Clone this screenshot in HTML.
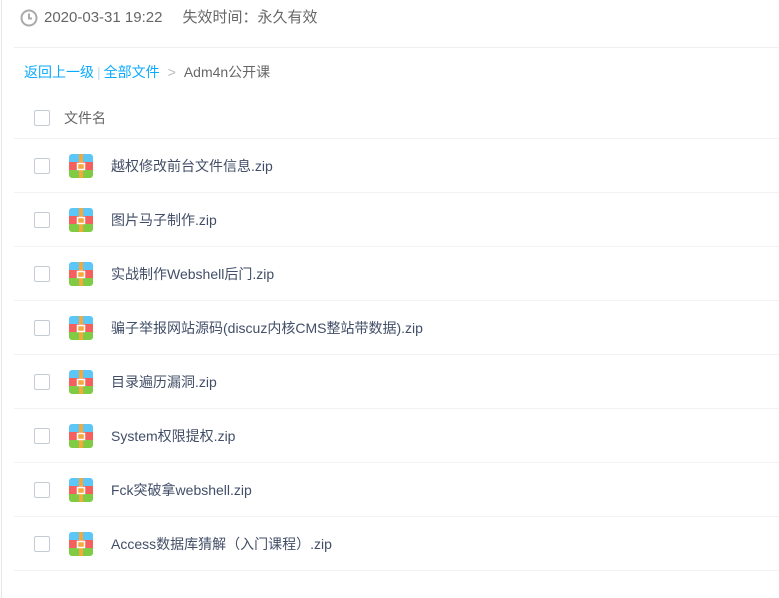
<!DOCTYPE html>
<html><head><meta charset="utf-8"><style>
*{margin:0;padding:0;box-sizing:border-box}
body{width:779px;height:598px;background:#fff;font-family:"Liberation Sans","Noto Sans CJK SC",sans-serif;position:relative;overflow:hidden;color:#424e67}
.lb{position:absolute;left:1px;top:0;width:1px;height:598px;background:#e4e6ea}
.top{position:absolute;left:20px;top:8px;font-size:15px;color:#666;height:20px;line-height:20px;display:flex;align-items:center}
.hr{position:absolute;left:14px;right:0;height:1px;background:#eef0f4}
.bc{position:absolute;left:24px;top:62px;font-size:14px;line-height:20px;color:#666}
.bc a{color:#09aaff;text-decoration:none}
.cb{position:absolute;left:34px;width:16px;height:16px;border:1px solid #c5ccd6;border-radius:2px;background:#fff}
.row{position:absolute;left:0;right:0;height:54px}
.row .cb{top:19px}
.row .t{position:absolute;left:111px;top:17px;font-size:14px;line-height:20px;color:#424e67}
.row .line{position:absolute;left:14px;right:0;bottom:0;height:1px;background:#f0f2f6}
.ic{position:absolute;left:69px;top:15px;width:24px;height:24px;border-radius:3px;overflow:hidden}
</style></head><body>
<div class="lb"></div>
<div class="top">
<svg width="18" height="18" viewBox="0 0 18 18"><circle cx="9" cy="9" r="7.5" fill="none" stroke="#aaa" stroke-width="2"/><path d="M9 4.5V9.5H12" fill="none" stroke="#aaa" stroke-width="2"/></svg>
<span style="margin-left:6px">2020-03-31 19:22</span><span style="margin-left:20px">失效时间：永久有效</span></div>
<div class="hr" style="top:47px"></div>
<div class="bc"><a>返回上一级</a><span style="color:#c5d8ec;margin:0 3px">|</span><a>全部文件</a><span style="color:#bbb;margin:0 8px">&gt;</span><span>Adm4n公开课</span></div>
<div class="cb" style="top:110px"></div>
<div style="position:absolute;left:64px;top:108px;font-size:14px;line-height:20px;color:#666">文件名</div>
<div class="hr" style="top:138px;background:#f0f2f6"></div>
<div id="rows"></div>
<script>
var n=["越权修改前台文件信息.zip","图片马子制作.zip","实战制作Webshell后门.zip","骗子举报网站源码(discuz内核CMS整站带数据).zip","目录遍历漏洞.zip","System权限提权.zip","Fck突破拿webshell.zip","Access数据库猜解（入门课程）.zip"];
var h="";
n.forEach(function(s,i){h+='<div class="row" style="top:'+(139+i*54)+'px"><div class="cb"></div><div class="ic"><svg width="24" height="24"><rect width="24" height="8" fill="#5cc6f6"/><rect y="8" width="24" height="8" fill="#f5605e"/><rect y="16" width="24" height="8" fill="#7fcb43"/><rect x="10" width="4" height="24" fill="#f5a93a"/><rect x="8.5" y="9.5" width="7" height="6" fill="#f5a93a" stroke="#fff" stroke-width="1.5"/></svg></div><div class="t">'+s+'</div><div class="line"></div></div>';});
document.getElementById("rows").innerHTML=h;
</script>
</body></html>
